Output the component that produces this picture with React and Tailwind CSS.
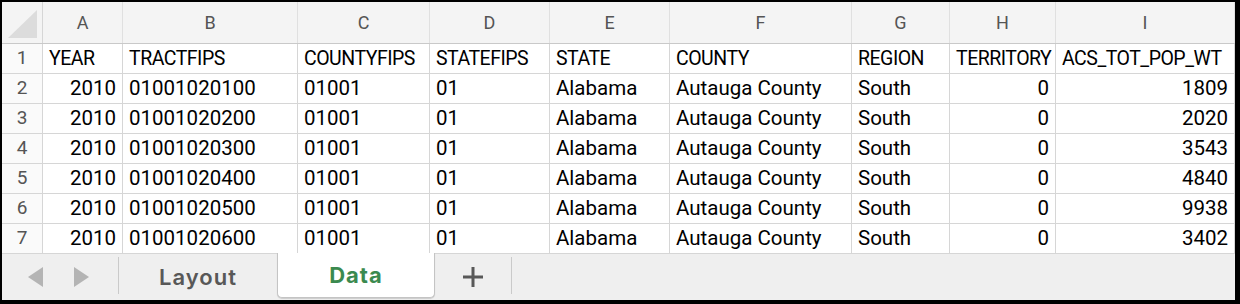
import React from 'react';

const columns = [
  { key: 'year', letter: 'A', label: 'YEAR', width: 'w-[80px]', align: 'right' },
  { key: 'tract', letter: 'B', label: 'TRACTFIPS', width: 'w-[175px]' },
  { key: 'county', letter: 'C', label: 'COUNTYFIPS', width: 'w-[132px]' },
  { key: 'state', letter: 'D', label: 'STATEFIPS', width: 'w-[120px]' },
  { key: 'stateName', letter: 'E', label: 'STATE', width: 'w-[120px]' },
  { key: 'countyName', letter: 'F', label: 'COUNTY', width: 'w-[182px]' },
  { key: 'region', letter: 'G', label: 'REGION', width: 'w-[98px]' },
  { key: 'territory', letter: 'H', label: 'TERRITORY', width: 'w-[106px]', align: 'right' },
  { key: 'pop', letter: 'I', label: 'ACS_TOT_POP_WT', width: 'w-[179px]', align: 'right' },
];

const pops = [1809, 2020, 3543, 4840, 9938, 3402];

const rows = pops.map((pop, i) => ({
  year: 2010,
  tract: `01001020${i + 1}00`,
  county: '01001',
  state: '01',
  stateName: 'Alabama',
  countyName: 'Autauga County',
  region: 'South',
  territory: 0,
  pop,
}));

const cellFont = { fontFamily: 'Roboto, "Open Sans", sans-serif' };

const Cell = ({ col, children, header }) => (
  <div
    className={`${col.width} shrink-0 h-full border-r border-[#d6d6d6] px-[6px] flex items-center text-black whitespace-nowrap overflow-hidden ${
      header ? 'text-[19.5px] tracking-[-0.5px]' : 'text-[20.5px]'
    } ${col.align === 'right' && !header ? 'justify-end' : ''}`}
  >
    {children}
  </div>
);

const SheetTabs = () => (
  <div
    className="h-[46px] bg-[#efefef] flex items-stretch"
    style={{ fontFamily: 'Inter, "Liberation Sans", sans-serif' }}
  >
    {/* scroll arrows */}
    <div className="w-[116px] flex items-center">
      <svg width="15" height="20" viewBox="0 0 15 20" className="ml-[26px]">
        <polygon points="15,0 15,20 0,10" fill="#b4b4b4" />
      </svg>
      <svg width="15" height="20" viewBox="0 0 15 20" className="ml-[31px]">
        <polygon points="0,0 0,20 15,10" fill="#b4b4b4" />
      </svg>
    </div>
    <div className="w-px bg-[#cacaca] mt-[3px] mb-[6px]" />
    <div className="w-[158px] flex items-center justify-center text-[22px] font-semibold tracking-[1px] text-[#585858]">
      Layout
    </div>
    <div className="relative z-10 -mt-px mb-[2px] w-[158px] bg-white border-x border-b border-[#c4c4c4] rounded-b-[5px] shadow-[0_1px_1px_rgba(0,0,0,0.15)] flex items-center justify-center text-[22px] font-bold tracking-[1px] text-[#3b8a4f]">
      Data
    </div>
    <div className="w-[76px] flex items-center justify-center">
      <svg width="20" height="20" viewBox="0 0 20 20">
        <rect x="8.5" y="0" width="3" height="20" fill="#585858" />
        <rect x="0" y="8.5" width="20" height="3" fill="#585858" />
      </svg>
    </div>
    <div className="w-px bg-[#cacaca] mt-[3px] mb-[6px]" />
  </div>
);

export default function App() {
  return (
    <div className="w-[1240px] h-[304px] bg-black pl-[2px] pt-[2px] pr-[5px] pb-[4px]">
      <div className="w-full h-full bg-white flex flex-col">
        {/* column letters */}
        <div className="h-[42px] flex bg-[#f4f4f4] border-b border-[#c9c9c9]" style={cellFont}>
          <div className="w-[41px] shrink-0 border-r border-[#d6d6d6] relative">
            <svg width="30" height="28" viewBox="0 0 30 28" className="absolute left-[6px] top-[8px]">
              <polygon points="0,28 29,28 29,0" fill="#dcdcdc" />
            </svg>
          </div>
          {columns.map((col) => (
            <div
              key={col.key}
              className={`${col.width} shrink-0 border-r border-[#e0e0e0] flex items-center justify-center text-[18px] text-[#555]`}
            >
              {col.letter}
            </div>
          ))}
        </div>

        {/* header row + data rows */}
        <div style={cellFont}>
          <div className="h-[30px] flex border-b border-[#d6d6d6]">
            <div className="w-[41px] shrink-0 border-r border-[#d6d6d6] bg-[#fafafa] flex items-center justify-center text-[19px] text-[#555]">
              1
            </div>
            {columns.map((col) => (
              <Cell key={col.key} col={col} header>
                {col.label}
              </Cell>
            ))}
          </div>
          {rows.map((row, i) => (
            <div key={i} className="h-[30px] flex border-b border-[#d6d6d6]">
              <div className="w-[41px] shrink-0 border-r border-[#d6d6d6] bg-[#fafafa] flex items-center justify-center text-[19px] text-[#555]">
                {i + 2}
              </div>
              {columns.map((col) => (
                <Cell key={col.key} col={col}>
                  {row[col.key]}
                </Cell>
              ))}
            </div>
          ))}
        </div>

        <SheetTabs />
      </div>
    </div>
  );
}
